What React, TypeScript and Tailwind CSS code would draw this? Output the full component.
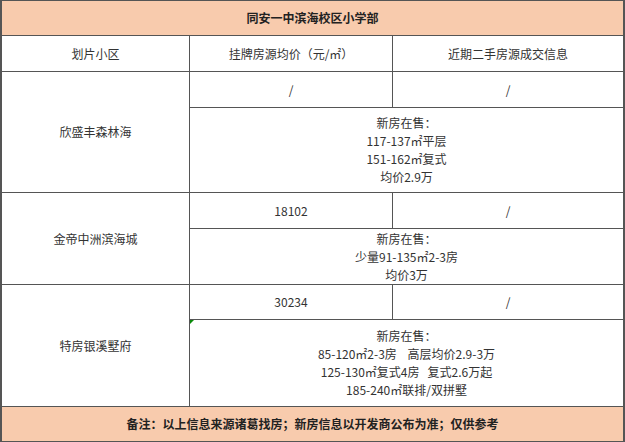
const FONT = '"Noto Sans CJK SC", "Microsoft YaHei", sans-serif';

type Block = {
  name: string;
  price: string;
  deal: string;
  lines: string[];
};

const BLOCKS: Block[] = [
  {
    name: "欣盛丰森林海",
    price: "/",
    deal: "/",
    lines: ["新房在售：", "117-137㎡平层", "151-162㎡复式", "均价2.9万"],
  },
  {
    name: "金帝中洲滨海城",
    price: "18102",
    deal: "/",
    lines: ["新房在售：", "少量91-135㎡2-3房", "均价3万"],
  },
  {
    name: "特房银溪墅府",
    price: "30234",
    deal: "/",
    lines: [
      "新房在售：",
      "85-120㎡2-3房\u00a0\u00a0\u00a0\u00a0高层均价2.9-3万",
      "125-130㎡复式4房\u00a0\u00a0\u00a0复式2.6万起",
      "185-240㎡联排/双拼墅",
    ],
  },
];

function Cell({ className = "", children }: { className?: string; children?: React.ReactNode }) {
  return (
    <div className={"flex items-center justify-center bg-white text-center " + className}>
      {children}
    </div>
  );
}

export default function App() {
  return (
    <div
      className="w-[625px] h-[442px] bg-white text-[12px] text-[#333333]"
      style={{ fontFamily: FONT }}
    >
      <div className="grid h-full grid-cols-[187px_202px_1fr] grid-rows-[34px_35px_35px_84px_35px_55px_34px_86px_34px] gap-px border-l-2 border-r-2 border-t border-b border-[#555555] bg-[#555555]">
        {/* Title */}
        <div className="col-span-3 flex items-center justify-center bg-[#f8cbad] font-bold text-[#222222]">
          同安一中滨海校区小学部
        </div>

        {/* Column headers */}
        <Cell>划片小区</Cell>
        <Cell>挂牌房源均价（元/㎡）</Cell>
        <Cell>近期二手房源成交信息</Cell>

        {BLOCKS.map((b, i) => (
          <div key={b.name} className="contents">
            <Cell className="row-span-2">{b.name}</Cell>
            <Cell>{b.price}</Cell>
            <Cell>{b.deal}</Cell>
            <Cell className="relative col-span-2 flex-col leading-[18px]">
              {i === 2 && (
                <span className="absolute left-0 top-0 h-0 w-0 border-r-[4px] border-t-[4px] border-r-transparent border-t-[#0a8a0a]" />
              )}
              {b.lines.map((l) => (
                <span key={l}>{l}</span>
              ))}
            </Cell>
          </div>
        ))}

        {/* Footer note */}
        <div className="col-span-3 flex items-center justify-center bg-[#f8cbad] font-bold text-[#222222]">
          备注：以上信息来源诸葛找房；新房信息以开发商公布为准；仅供参考
        </div>
      </div>
    </div>
  );
}
